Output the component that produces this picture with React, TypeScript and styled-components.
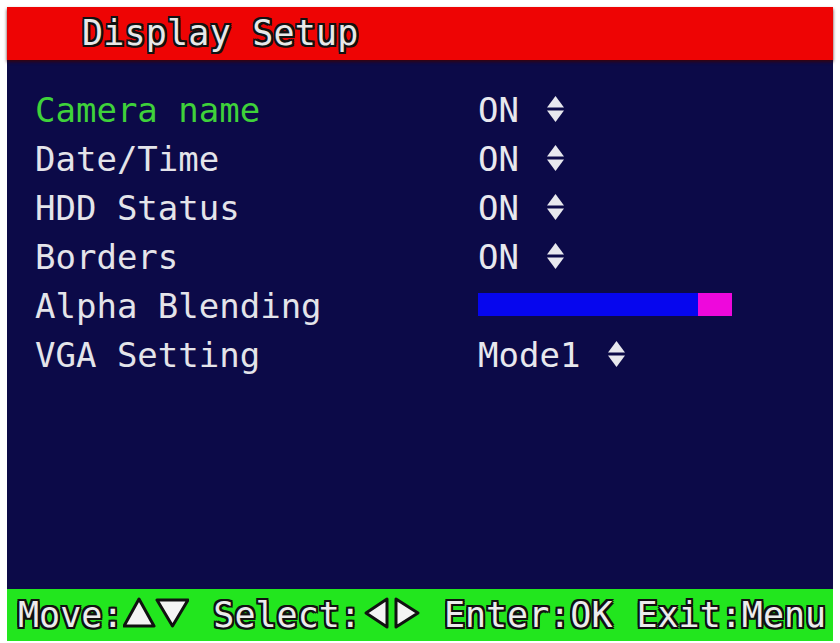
import React from "react";
import styled, { createGlobalStyle } from "styled-components";

const Global = createGlobalStyle`
  html, body { margin: 0; padding: 0; background: #ffffff; }
  body { width: 840px; height: 643px; overflow: hidden; }
`;

const MONO = `"DejaVu Sans Mono", "Liberation Mono", monospace`;
const OUTLINE = `
  -2px 0 0 #111, 2px 0 0 #111, 0 -2px 0 #111, 0 2px 0 #111,
  -2px -2px 0 #111, 2px 2px 0 #111, -2px 2px 0 #111, 2px -2px 0 #111
`;

const Page = styled.div`
  padding: 7px 0 0 7px;
`;

const Screen = styled.div`
  width: 826px;
  height: 634px;
  display: flex;
  flex-direction: column;
  background: #0c0a48;
  font-family: ${MONO};
`;

const Header = styled.div`
  height: 53px;
  background: #ee0404;
  padding-left: 75px;
  font-size: 35px;
  line-height: 53px;
  color: #e8e8e8;
  text-shadow: ${OUTLINE};
  letter-spacing: 0.2px;
  box-shadow: 0 2px 3px rgba(60, 0, 0, 0.8);
  position: relative;
  z-index: 1;
`;

const Body = styled.div`
  flex: 1;
  padding: 26px 0 0 28px;
  display: flex;
  flex-direction: column;
`;

const Row = styled.div`
  display: grid;
  grid-template-columns: 443px 1fr;
  height: 49px;
  align-items: center;
  font-size: 34px;
  line-height: 49px;
`;

const Label = styled.div<{ $active?: boolean }>`
  color: ${(p) => (p.$active ? "#3fd23a" : "#e4e4ea")};
`;

const Value = styled.div`
  display: flex;
  align-items: center;
  color: #e8e8ee;
`;

const Spin = styled.svg`
  margin-left: 27px;
  margin-top: -4px;
`;

const Slider = styled.div`
  display: flex;
  width: 254px;
  height: 23px;
  margin-top: -5px;
`;

const SliderFill = styled.div`
  background: #0606ee;
  height: 100%;
`;

const SliderKnob = styled.div`
  background: #ee08dc;
  width: 34px;
  height: 100%;
`;

const Footer = styled.div`
  height: 52px;
  background: #22e61e;
  display: flex;
  align-items: center;
  padding-left: 11px;
  gap: 24px;
  font-size: 35px;
  line-height: 52px;
  color: #ececec;
  text-shadow: ${OUTLINE};
  white-space: pre;
`;

const Hint = styled.div`
  display: flex;
  align-items: center;
`;

const HintIcons = styled.svg`
  margin-top: -4px;
`;

const SpinArrows = () => (
  <Spin width="19" height="28" viewBox="0 0 19 28">
    <polygon points="9.5,1 18,12.5 1,12.5" fill="#e8e8ee" />
    <polygon points="1,15.5 18,15.5 9.5,27" fill="#e8e8ee" />
  </Spin>
);

const UpDown = () => (
  <HintIcons width="66" height="32" viewBox="0 0 66 32">
    <polygon points="16,2 31,29 1,29" fill="#f4f4f4" stroke="#111" strokeWidth="3" strokeLinejoin="round" />
    <polygon points="34,3 65,3 49.5,29" fill="#f4f4f4" stroke="#111" strokeWidth="3" strokeLinejoin="round" />
  </HintIcons>
);

const LeftRight = () => (
  <HintIcons width="56" height="32" viewBox="0 0 56 32" style={{ marginLeft: 3 }}>
    <polygon points="23,2 23,30 2,16" fill="#f4f4f4" stroke="#111" strokeWidth="3" strokeLinejoin="round" />
    <polygon points="32,2 32,30 54,16" fill="#f4f4f4" stroke="#111" strokeWidth="3" strokeLinejoin="round" />
  </HintIcons>
);

const rows: { label: string; value: string; active?: boolean }[] = [
  { label: "Camera name", value: "ON", active: true },
  { label: "Date/Time", value: "ON" },
  { label: "HDD Status", value: "ON" },
  { label: "Borders", value: "ON" },
];

export default function App() {
  const blend = 220;
  return (
    <>
      <Global />
      <Page>
        <Screen>
          <Header>Display Setup</Header>
          <Body>
            {rows.map((r) => (
              <Row key={r.label}>
                <Label $active={r.active}>{r.label}</Label>
                <Value>
                  {r.value}
                  <SpinArrows />
                </Value>
              </Row>
            ))}
            <Row>
              <Label>Alpha Blending</Label>
              <Value>
                <Slider>
                  <SliderFill style={{ width: blend }} />
                  <SliderKnob />
                </Slider>
              </Value>
            </Row>
            <Row>
              <Label>VGA Setting</Label>
              <Value>
                Mode1
                <SpinArrows />
              </Value>
            </Row>
          </Body>
          <Footer>
            <Hint>
              Move:
              <UpDown />
            </Hint>
            <Hint>
              Select:
              <LeftRight />
            </Hint>
            <Hint>Enter:OK</Hint>
            <Hint>Exit:Menu</Hint>
          </Footer>
        </Screen>
      </Page>
    </>
  );
}
